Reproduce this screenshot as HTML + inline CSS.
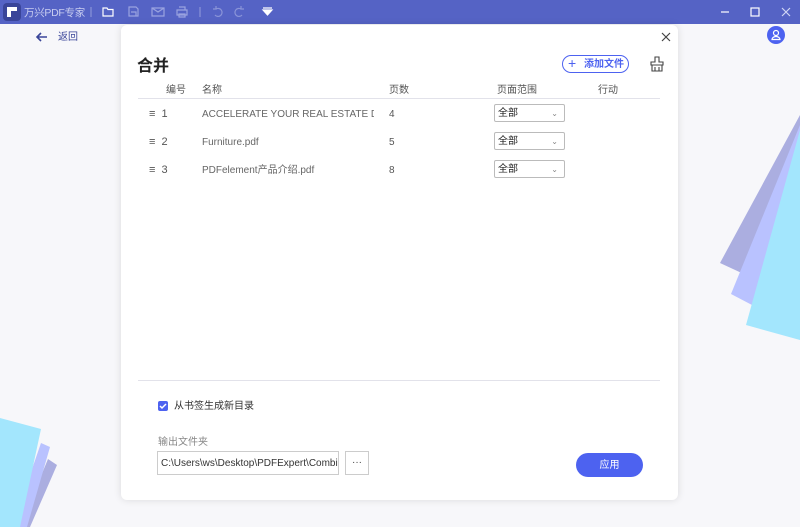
<!DOCTYPE html>
<html><head><meta charset="utf-8"><style>
*{margin:0;padding:0;box-sizing:border-box}
body{width:800px;height:527px;overflow:hidden;background:#f7f7fa;font-family:"Liberation Sans","Noto Sans CJK SC",sans-serif;position:relative;color:#333;line-height:14px}
.abs{position:absolute}
.tb{left:0;top:0;width:800px;height:24px;background:#5563c5}
.dlg{left:121px;top:25px;width:557px;height:475px;background:#fff;border-radius:6px;box-shadow:0 0 8px rgba(0,0,0,.12)}
.t{font-size:10px;color:#555;white-space:nowrap;line-height:14px}
.sel{width:71px;height:18px;border:1px solid #bbb;border-radius:2px;font-size:10px;color:#222;padding:2px 3px 0;background:#fff;line-height:14px}
.sel span{position:absolute;right:6px;top:2px;color:#888;font-size:8px}
</style></head><body>
<svg class="abs" style="left:0;top:0" width="800" height="527">
<polygon points="800,115 720,263 800,300" fill="#abaee0"/>
<polygon points="800,125 731,294 800,330" fill="#b9c2ff"/>
<polygon points="800,130 746,325 800,340" fill="#a3e6fd"/>
<polygon points="48,459 57,465 30,527 20,527" fill="#abaee0"/>
<polygon points="41,443 50,447 27,527 12,527" fill="#b9c2ff"/>
<polygon points="0,418 41,429 20,527 0,527" fill="#a3e6fd"/>
</svg>
<div class="abs tb"></div>
<div class="abs" style="left:3px;top:3px;width:18px;height:18px;background:#3a4599;border-radius:4px"></div>
<div class="abs" style="left:7px;top:7px;width:10px;height:4px;background:#fff"></div>
<div class="abs" style="left:7px;top:11px;width:4px;height:6px;background:#fff"></div>
<div class="abs" style="left:24px;top:6px;font-size:10.5px;color:#c8cdf0;letter-spacing:-0.3px">万兴PDF专家</div>
<svg class="abs" style="left:0;top:0" width="800" height="24" fill="none" stroke="#d0d5f4" stroke-width="1.2">
<line x1="91" y1="7" x2="91" y2="17" stroke="#8a94d8"/>
<path d="M103 8h4l1 1.5h5v6.5h-10z" stroke="#fff"/>
<path d="M129 7h7l2 2v7h-9z M131 12h5v4" stroke="#9aa3e0"/>
<path d="M152 8h12v8h-12z M152 8l6 4l6-4" stroke="#9aa3e0"/>
<path d="M177 10h10v5h-10z M179 7h6v3 M179 14h6v3h-6z" stroke="#9aa3e0"/>
<line x1="200" y1="7" x2="200" y2="17" stroke="#8a94d8"/>
<path d="M216 9a4 4 0 1 1 -1 6 M216 6v3h-3" stroke="#8a94d8"/>
<path d="M241 9a4 4 0 1 0 1 6 M241 6v3h3" stroke="#8a94d8"/>
<path d="M263 8h9 M263 10h9l-4.5 5z" stroke="#fff" fill="#fff"/>
<line x1="721" y1="12" x2="729" y2="12" stroke="#fff"/>
<rect x="751" y="8" width="8" height="8" stroke="#fff"/>
<path d="M782 8l8 8M790 8l-8 8" stroke="#d0d5f4"/>
</svg>
<svg class="abs" style="left:35px;top:30px" width="14" height="14" fill="none" stroke="#3a4599" stroke-width="1.6"><path d="M12 7H2M6 3L2 7l4 4"/></svg>
<div class="abs" style="left:58px;top:31px;font-size:10px;color:#3a4599">返回</div>
<div class="abs" style="left:767px;top:26px;width:18px;height:18px;border-radius:50%;background:#4d62f0"></div>
<svg class="abs" style="left:767px;top:26px" width="18" height="18" fill="none" stroke="#fff" stroke-width="1.2"><circle cx="9" cy="7" r="2.5"/><path d="M5 13.5a4 3 0 0 1 8 0z"/></svg>
<div class="abs dlg"></div>
<svg class="abs" style="left:661px;top:32px" width="10" height="10" stroke="#444" stroke-width="1.2"><path d="M1 1l8 8M9 1l-8 8"/></svg>
<div class="abs" style="left:137px;top:57px;font-size:16px;font-weight:bold;color:#222;line-height:20px">合并</div>
<div class="abs" style="left:562px;top:55px;width:67px;height:18px;border:1.5px solid #4d62f0;border-radius:9px;font-size:10px;color:#4d62f0;font-weight:bold;padding:1px 0 0 21px;line-height:15px">添加文件</div>
<div class="abs" style="left:568px;top:55px;font-size:14px;color:#4d62f0;line-height:16px">+</div>
<svg class="abs" style="left:650px;top:56px" width="14" height="16" fill="none" stroke="#444" stroke-width="1.1"><path d="M5 1h4v5h4v3H1V6h4z M2 9v6h10V9 M5 11v4M9 11v4"/></svg>
<div class="abs t" style="left:166px;top:84px">编号</div>
<div class="abs t" style="left:202px;top:84px">名称</div>
<div class="abs t" style="left:389px;top:84px">页数</div>
<div class="abs t" style="left:497px;top:84px">页面范围</div>
<div class="abs t" style="left:598px;top:84px">行动</div>
<div class="abs" style="left:138px;top:98px;width:522px;height:1px;background:#e2e2ea"></div>

<div class="abs t" style="left:149px;top:107px;font-size:11px">≡ &nbsp;1</div>
<div class="abs t" style="left:202px;top:108px;width:172px;overflow:hidden;color:#666">ACCELERATE YOUR REAL ESTATE DEALS</div>
<div class="abs t" style="left:389px;top:108px">4</div>
<div class="abs sel" style="left:494px;top:104px">全部<span>⌄</span></div>

<div class="abs t" style="left:149px;top:135px;font-size:11px">≡ &nbsp;2</div>
<div class="abs t" style="left:202px;top:136px;color:#666">Furniture.pdf</div>
<div class="abs t" style="left:389px;top:136px">5</div>
<div class="abs sel" style="left:494px;top:132px">全部<span>⌄</span></div>

<div class="abs t" style="left:149px;top:163px;font-size:11px">≡ &nbsp;3</div>
<div class="abs t" style="left:202px;top:164px;color:#666">PDFelement产品介绍.pdf</div>
<div class="abs t" style="left:389px;top:164px">8</div>
<div class="abs sel" style="left:494px;top:160px">全部<span>⌄</span></div>

<div class="abs" style="left:138px;top:380px;width:522px;height:1px;background:#e2e2ea"></div>
<div class="abs" style="left:158px;top:401px;width:10px;height:10px;background:#4d62f0;border-radius:2px"></div>
<svg class="abs" style="left:158px;top:401px" width="10" height="10" fill="none" stroke="#fff" stroke-width="1.5"><path d="M2 5l2 2l4-4"/></svg>
<div class="abs t" style="left:174px;top:400px;color:#333">从书签生成新目录</div>
<div class="abs t" style="left:158px;top:436px;color:#888">输出文件夹</div>
<div class="abs" style="left:157px;top:451px;width:182px;height:24px;border:1px solid #ccc;font-size:10px;color:#333;padding:5px 3px;white-space:nowrap;overflow:hidden">C:\Users\ws\Desktop\PDFExpert\Combine</div>
<div class="abs" style="left:345px;top:451px;width:24px;height:24px;border:1px solid #ccc;font-size:10px;text-align:center;padding-top:4px;color:#444">···</div>
<div class="abs" style="left:576px;top:453px;width:67px;height:24px;border-radius:12px;background:#4d62f0;color:#fff;font-size:10px;text-align:center;padding-top:6px">应用</div>
</body></html>
